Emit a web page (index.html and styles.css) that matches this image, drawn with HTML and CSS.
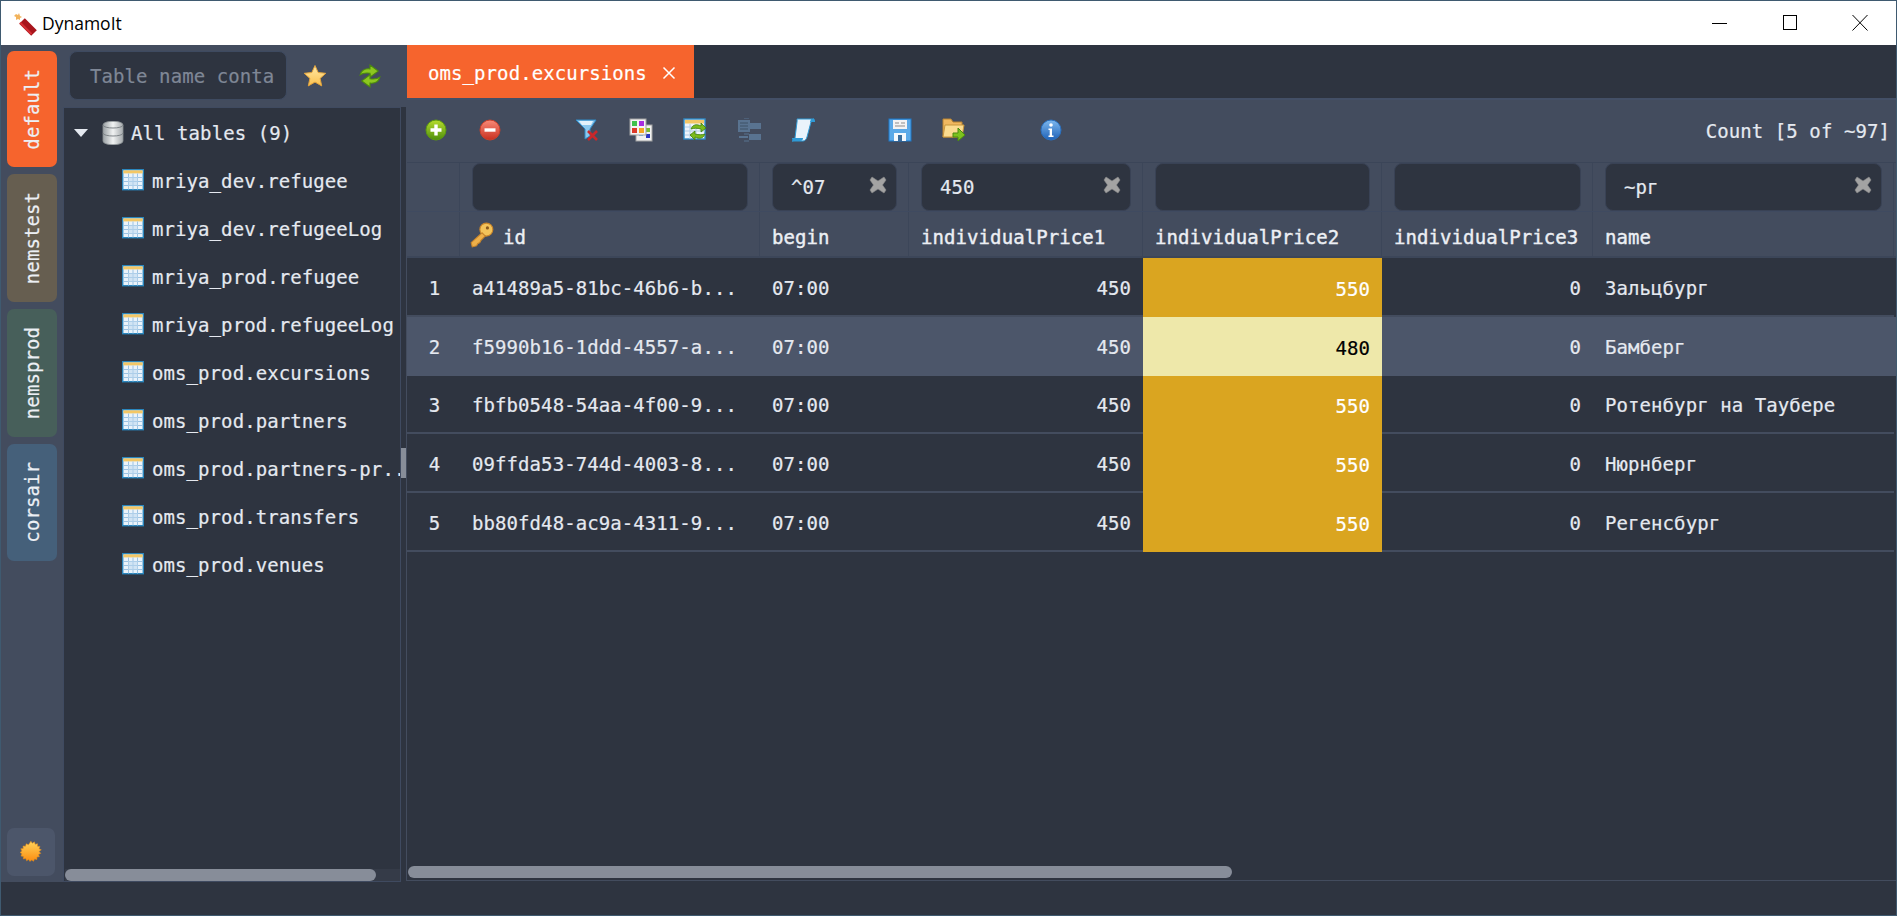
FILE: index.html
```html
<!DOCTYPE html>
<html lang="en">
<head>
<meta charset="utf-8">
<title>DynamoIt</title>
<link rel="stylesheet" href="styles.css">
</head>
<body>
<svg class="defs" width="0" height="0" aria-hidden="true">
  <defs>
    <linearGradient id="gGreen" x1="0" y1="0" x2="0" y2="1"><stop offset="0" stop-color="#b6dc2e"/><stop offset="1" stop-color="#4f8f0c"/></linearGradient>
    <linearGradient id="gRed" x1="0" y1="0" x2="0" y2="1"><stop offset="0" stop-color="#f98a78"/><stop offset="1" stop-color="#c8301f"/></linearGradient>
    <linearGradient id="gBlue" x1="0" y1="0" x2="0" y2="1"><stop offset="0" stop-color="#7db8ef"/><stop offset="1" stop-color="#1f62b8"/></linearGradient>
    <linearGradient id="gSun" x1="0" y1="0" x2="0" y2="1"><stop offset="0" stop-color="#ffd35a"/><stop offset="1" stop-color="#fb8c10"/></linearGradient>
    <linearGradient id="gStar" x1="0" y1="0" x2="0" y2="1"><stop offset="0" stop-color="#ffe9a8"/><stop offset="1" stop-color="#fbc04c"/></linearGradient>
    <linearGradient id="gDb" x1="0" y1="0" x2="1" y2="0"><stop offset="0" stop-color="#9aa0a4"/><stop offset=".5" stop-color="#f0f2f2"/><stop offset="1" stop-color="#a4a9ac"/></linearGradient>
    <symbol id="tbl" viewBox="0 0 22 22">
      <rect x="0.700" y="0.700" width="20.600" height="20" fill="#eaf3fb" stroke="#2a86bd" stroke-width="1.400"/>
      <rect x="1.400" y="1.400" width="19.200" height="3" fill="#f3c766"/>
      <path d="M1 8.500h20M1 12.500h20M1 16.500h20M6.500 4.500v16M11 4.500v16M15.500 4.500v16" stroke="#9cc3e3" stroke-width="1" fill="none"/>
      <rect x="6" y="8" width="10" height="9" fill="#bcd7ee" opacity=".55"/>
    </symbol>
    <symbol id="xmark" viewBox="0 0 18 18">
      <path d="M3 1 9 5l6-4 2 3-3.500 5L17 14l-2 3-6-4-6 4-2-3 3.500-5L1 4z" fill="#a3a3a3" stroke="#8a8a8a" stroke-width=".6"/>
    </symbol>
  </defs>
</svg>
<div class="window">
  <header class="titlebar">
    <svg class="app-icon" viewBox="0 0 26 26" width="26" height="26">
      <path d="M10 10 22 22" stroke="#a8151c" stroke-width="8" stroke-linecap="butt"/>
      <path d="M8 11.500 19.500 23" stroke="#e0353a" stroke-width="2" opacity=".8"/>
      <path d="M4 3l2 1 1-2 1 3 2 1-2 1 0 2-2-1-2 1 0-3-2-1z" fill="#f2b35c"/>
    </svg>
    <span class="app-name">DynamoIt</span>
    <div class="win-controls">
      <svg class="win-btn" viewBox="0 0 16 16" width="16" height="16"><path d="M0 8.500h15" stroke="#000" fill="none"/></svg>
      <svg class="win-btn" viewBox="0 0 16 16" width="16" height="16"><rect x="1.500" y="0.500" width="13" height="14" stroke="#000" fill="none"/></svg>
      <svg class="win-btn" viewBox="0 0 16 16" width="16" height="16"><path d="M0.500 0 15.500 15.500M15.500 0 0.500 15.500" stroke="#000" fill="none"/></svg>
    </div>
  </header>

  <div class="workspace">
    <nav class="rail">
      <div class="rail-tab tab-default"><span>default</span></div>
      <div class="rail-tab tab-nemstest"><span>nemstest</span></div>
      <div class="rail-tab tab-nemsprod"><span>nemsprod</span></div>
      <div class="rail-tab tab-corsair"><span>corsair</span></div>
      <div class="theme-btn">
        <svg viewBox="0 0 22 22" width="22" height="22"><path d="M11 0l1.600 2.300 2.300-1.600.8 2.700 2.700-.6-.1 2.800 2.800.2-1 2.600 2.500 1.200L20 11.500l2 2-2.500 1.200.9 2.600-2.700.3v2.800l-2.700-.7-1 2.600-2.300-1.500L10 22.500 8.500 20.300 6.200 21.800 5.300 19.200l-2.700.5.100-2.800-2.700-.4L1 13.900-1 12.500 1 11-.2 8.400 2.500 8 2.200 5.300 5 5.500 5.800 2.800 8.300 4z" transform="translate(1 .2) scale(.9)" fill="url(#gSun)" stroke="#e08a1a" stroke-width=".6"/></svg>
      </div>
    </nav>

    <aside class="side">
      <div class="side-top">
        <div class="search">Table name conta</div>
        <svg class="star" viewBox="0 0 24 24" width="24" height="24"><path d="M12 1.500l3.200 7 7.600.8-5.700 5.100 1.600 7.500L12 18.100l-6.700 3.800 1.600-7.500L1.200 9.300l7.600-.8z" fill="url(#gStar)" stroke="#e0a23c" stroke-width="1"/></svg>
        <svg class="refresh" viewBox="2 1 20 22" width="24" height="24">
          <path d="M3 11c1-4 4-6 9-5.500V2l7.500 5.500L12 13V9.500C8 9 5 9.500 3 11z" fill="#8cc71f" stroke="#4c8c0c" stroke-width="1"/>
          <path d="M21 13c-1 4-4 6-9 5.500V22l-7.500-5.500L12 11v3.500c4 .5 7 0 9-1.500z" fill="#8cc71f" stroke="#4c8c0c" stroke-width="1"/>
        </svg>
      </div>
      <div class="tree-pane">
        <div class="tree">
          <div class="tree-root">
            <span class="caret"></span>
            <svg class="db" viewBox="0 0 22 24" width="22" height="24">
              <path d="M1 4c0-5 20-5 20 0v16c0 5-20 5-20 0z" fill="url(#gDb)" stroke="#8d9396" stroke-width=".8"/>
              <path d="M1 4c0 4 20 4 20 0M1 12c0 4 20 4 20 0" fill="none" stroke="#7f8589" stroke-width="1"/>
            </svg>
            <span>All tables (9)</span>
          </div>
          <div class="tree-item"><svg class="tbl-ico"><use href="#tbl"/></svg><span class="tree-label">mriya_dev.refugee</span></div>
          <div class="tree-item"><svg class="tbl-ico"><use href="#tbl"/></svg><span class="tree-label">mriya_dev.refugeeLog</span></div>
          <div class="tree-item"><svg class="tbl-ico"><use href="#tbl"/></svg><span class="tree-label">mriya_prod.refugee</span></div>
          <div class="tree-item"><svg class="tbl-ico"><use href="#tbl"/></svg><span class="tree-label">mriya_prod.refugeeLog</span></div>
          <div class="tree-item"><svg class="tbl-ico"><use href="#tbl"/></svg><span class="tree-label">oms_prod.excursions</span></div>
          <div class="tree-item"><svg class="tbl-ico"><use href="#tbl"/></svg><span class="tree-label">oms_prod.partners</span></div>
          <div class="tree-item"><svg class="tbl-ico"><use href="#tbl"/></svg><span class="tree-label">oms_prod.partners-pr..</span></div>
          <div class="tree-item"><svg class="tbl-ico"><use href="#tbl"/></svg><span class="tree-label">oms_prod.transfers</span></div>
          <div class="tree-item"><svg class="tbl-ico"><use href="#tbl"/></svg><span class="tree-label">oms_prod.venues</span></div>
        </div>
        <div class="hscroll side-scroll"><div class="thumb"></div></div>
      </div>
    </aside>

    <div class="splitter"><div class="split-thumb"></div></div>

    <main class="main">
      <div class="tabstrip">
        <div class="tab">
          <span>oms_prod.excursions</span>
          <svg viewBox="0 0 14 14" width="14" height="14"><path d="M1.500 1.500 12.500 12.500M12.500 1.500 1.500 12.500" stroke="#fff" stroke-width="1.500" fill="none"/></svg>
        </div>
      </div>

      <div class="toolbar">
        <svg class="tool" viewBox="-1 -1 24 24"><circle cx="11" cy="11" r="10" fill="url(#gGreen)" stroke="#5c9a10"/><path d="M11 5.500v11M5.500 11h11" stroke="#fff" stroke-width="3.400"/></svg>
        <svg class="tool" viewBox="-1 -1 24 24"><circle cx="11" cy="11" r="10" fill="url(#gRed)" stroke="#c8402c"/><path d="M5.500 11h11" stroke="#fff" stroke-width="3.400"/></svg>
        <svg class="tool gap-left" viewBox="0 0 24 24">
          <path d="M1 2h20l-6 9v7l-5 3V11z" fill="#8cc8ee" stroke="#2f8ac6"/>
          <path d="M4 3h14l-2 4H7z" fill="#e4f2fb"/>
          <path d="M13 13l9 9M22 13l-9 9" stroke="#c9272a" stroke-width="2.600"/>
        </svg>
        <svg class="tool" viewBox="0 0 24 24">
          <rect x="7" y="7" width="16" height="16" fill="#f2f2f2" stroke="#a2a2a2"/>
          <rect x="10" y="14" width="4" height="4" fill="#6fb7e8"/><rect x="17" y="10" width="4" height="4" fill="#7abf30"/><rect x="17" y="16" width="4" height="4" fill="#2a35c4"/>
          <rect x="1" y="1" width="16" height="16" fill="#f4f4f4" stroke="#a2a2a2"/>
          <rect x="3" y="3" width="5" height="5" fill="#3fc24c"/><rect x="10" y="3" width="5" height="5" fill="#a72ee0"/><rect x="3" y="10" width="5" height="5" fill="#dd3a2a"/><rect x="10" y="10" width="5" height="5" fill="#f6a623"/>
        </svg>
        <svg class="tool" viewBox="0 0 24 24">
          <rect x="1" y="1" width="21" height="20" fill="#eef5fb" stroke="#2f8ac6" stroke-width="1.400"/>
          <rect x="2" y="2" width="19" height="3.500" fill="#f3c766"/>
          <path d="M2 9h20M2 13h20M2 17h20M7 6v15M13 6v15" stroke="#b0cde6"/>
          <path d="M8 11c2-5 6-5 10-3V5l5 5-5 4v-3c-4-1-7-1-10 0z" fill="#7cbb1c" stroke="#3d7f0c" stroke-width=".8"/>
          <path d="M22 16c-2 5-6 5-10 3v3l-5-5 5-4v3c4 1 7 1 10 0z" fill="#7cbb1c" stroke="#3d7f0c" stroke-width=".8"/>
        </svg>
        <svg class="tool dim" viewBox="0 0 24 24">
          <rect x="1" y="2" width="12" height="12" fill="#5d7a99"/>
          <path d="M3 5h8M3 8h8M3 11h8" stroke="#3f5269"/>
          <path d="M13 8h4M13 19h4M7 0h5M7 16h5M7 23h5" stroke="#5d7a99"/>
          <rect x="13" y="5" width="11" height="6" fill="#5d7a99"/>
          <rect x="12" y="16" width="12" height="6" fill="#5d7a99"/>
          <path d="M2 19h9" stroke="#5d7a99" stroke-width="2"/>
        </svg>
        <svg class="tool" viewBox="0 0 24 24">
          <path d="M6 1h17c-1.500 0-2.500 1-3 3l-4 15c-.5 2-2 4-4 4H1c2 0 2.500-1 3-3L6 4c.3-1 0-3 0-3z" fill="#eaf3fb" stroke="#2f9ad6"/>
          <path d="M1 20h11c0 2-1 3-3 3H3c-1 0-2-1-2-3z" fill="#2f9ad6"/>
          <path d="M20 1h3c1 0 1 2 1 3h-5z" fill="#2f9ad6"/>
        </svg>
        <svg class="tool gap-left" viewBox="0 0 24 24">
          <rect x="1" y="1" width="22" height="22" fill="#5ba9e8" stroke="#1f78c8"/>
          <rect x="5" y="2" width="14" height="9" fill="#f4f4f4"/>
          <path d="M7 5h4M13 5h4M7 8h10" stroke="#8d8d8d"/>
          <rect x="6" y="15" width="12" height="8" fill="#f4f8fc"/>
          <rect x="10" y="17" width="4" height="6" fill="#3a6d9e"/>
        </svg>
        <svg class="tool" viewBox="0 0 24 24">
          <path d="M1 1h8l2 3h9v15H1z" fill="#f0b860" stroke="#b98330"/>
          <path d="M3 7h19l-2 12H1z" fill="#fbdc90" stroke="#c8963c"/>
          <path d="M11 15h5v-5l7 7-7 6v-4h-5z" fill="#7cc21e" stroke="#4a8a10"/>
        </svg>
        <svg class="tool gap-left" viewBox="-1 -1 24 24">
          <circle cx="11" cy="11" r="10" fill="url(#gBlue)" stroke="#2a70c0"/>
          <circle cx="11" cy="6" r="1.800" fill="#fff"/>
          <path d="M8.500 9.500h3.500v7h1.500v1.500h-5v-1.500h1.200v-5.500h-1.200z" fill="#fff"/>
        </svg>
        <span class="count">Count [5 of ~97]</span>
      </div>

      <div class="grid">
        <div class="row filter-row">
          <div class="cell"></div>
          <div class="cell"><div class="filter"></div></div>
          <div class="cell"><div class="filter"><span>^07</span><svg class="clear"><use href="#xmark"/></svg></div></div>
          <div class="cell"><div class="filter"><span>450</span><svg class="clear"><use href="#xmark"/></svg></div></div>
          <div class="cell"><div class="filter"></div></div>
          <div class="cell"><div class="filter"></div></div>
          <div class="cell"><div class="filter"><span>~рг</span><svg class="clear"><use href="#xmark"/></svg></div></div>
        </div>
        <div class="row head-row">
          <div class="cell"></div>
          <div class="cell">
            <svg class="key" viewBox="0 0 22 24" width="24" height="26">
              <circle cx="15" cy="7" r="6" fill="#f3c35a" stroke="#c8852a"/>
              <circle cx="16" cy="5.500" r="1.500" fill="#8a5a1e"/>
              <path d="M11 10 1 19l1 4 4-1 1-2 2-1 1-2 4-4z" fill="#eeb04a" stroke="#c8852a"/>
            </svg>
            <span>id</span>
          </div>
          <div class="cell"><span>begin</span></div>
          <div class="cell"><span>individualPrice1</span></div>
          <div class="cell"><span>individualPrice2</span></div>
          <div class="cell"><span>individualPrice3</span></div>
          <div class="cell"><span>name</span></div>
        </div>

        <div class="row data-row">
          <div class="cell num">1</div><div class="cell">a41489a5-81bc-46b6-b...</div><div class="cell">07:00</div><div class="cell right">450</div><div class="cell right gold">550</div><div class="cell right">0</div><div class="cell">Зальцбург</div>
        </div>
        <div class="row data-row selected">
          <div class="cell num">2</div><div class="cell">f5990b16-1ddd-4557-a...</div><div class="cell">07:00</div><div class="cell right">450</div><div class="cell right pale">480</div><div class="cell right">0</div><div class="cell">Бамберг</div>
        </div>
        <div class="row data-row">
          <div class="cell num">3</div><div class="cell">fbfb0548-54aa-4f00-9...</div><div class="cell">07:00</div><div class="cell right">450</div><div class="cell right gold">550</div><div class="cell right">0</div><div class="cell">Ротенбург на Таубере</div>
        </div>
        <div class="row data-row">
          <div class="cell num">4</div><div class="cell">09ffda53-744d-4003-8...</div><div class="cell">07:00</div><div class="cell right">450</div><div class="cell right gold">550</div><div class="cell right">0</div><div class="cell">Нюрнберг</div>
        </div>
        <div class="row data-row">
          <div class="cell num">5</div><div class="cell">bb80fd48-ac9a-4311-9...</div><div class="cell">07:00</div><div class="cell right">450</div><div class="cell right gold">550</div><div class="cell right">0</div><div class="cell">Регенсбург</div>
        </div>
      </div>
      <div class="hscroll main-scroll"><div class="thumb"></div></div>
    </main>
  </div>
  <footer class="statusbar"></footer>
</div>
</body>
</html>
```

FILE: styles.css
```css
* { box-sizing: border-box; }

html, body {
  margin: 0;
  height: 100%;
  overflow: hidden;
}

body {
  background: #2e3440;
  color: #e5e9f0;
  font-family: "DejaVu Sans Mono", "Liberation Mono", monospace;
  font-size: 19px;
  letter-spacing: 0.08px;
  -webkit-text-stroke: 0.2px currentColor;
}

.defs { position: absolute; }

.window {
  width: 1897px;
  height: 916px;
  border: 1px solid #3f5a70;
  display: flex;
  flex-direction: column;
}

/* title bar */
.titlebar {
  flex: 0 0 44px;
  background: #fff;
  display: flex;
  align-items: center;
  padding-left: 11px;
}
.app-icon { margin-top: 1px; }
.app-name {
  font-family: "Open Sans", "Noto Sans", sans-serif;
  font-size: 17.500px;
  letter-spacing: 0;
  -webkit-text-stroke: 0;
  color: #000;
  margin-left: 4px;
}
.win-controls {
  margin-left: auto;
  display: flex;
  gap: 54px;
  padding-right: 28px;
}
.win-btn { display: block; }

/* workspace */
.workspace {
  flex: 0 0 837px;
  display: flex;
  min-height: 0;
}

/* connection rail */
.rail {
  flex: 0 0 62px;
  background: #434c5e;
  padding: 6px;
  display: flex;
  flex-direction: column;
  gap: 7px;
}
.rail-tab {
  width: 50px;
  border-radius: 7px;
  color: #eceff4;
  display: flex;
  align-items: center;
  justify-content: center;
}
.rail-tab span {
  writing-mode: vertical-rl;
  transform: rotate(180deg);
}
.tab-default { height: 116px; background: #f6642d; }
.tab-nemstest { height: 128px; background: #665e50; }
.tab-nemsprod { height: 128px; background: #475f5a; }
.tab-corsair { height: 117px; background: #45607a; }
.theme-btn {
  margin-top: auto;
  width: 48px;
  height: 48px;
  border-radius: 7px;
  background: #4c566a;
  display: flex;
  align-items: center;
  justify-content: center;
}

/* side panel */
.side {
  flex: 0 0 338px;
  min-width: 0;
  display: flex;
  flex-direction: column;
  background: #434c5e;
}
.side-top {
  flex: 0 0 62px;
  display: flex;
  align-items: flex-start;
  padding: 6px 0 0 6px;
}
.search {
  width: 218px;
  height: 49px;
  background: #2e3440;
  border: 1px solid #3e4a60;
  border-radius: 8px;
  color: #7f8796;
  line-height: 49px;
  padding-left: 20px;
  overflow: hidden;
  white-space: nowrap;
}
.star { margin: 13px 0 0 16px; }
.refresh { margin: 13px 0 0 31px; }

.tree-pane {
  flex: 1;
  min-height: 0;
  background: #2e3440;
  border: 1px solid #3f4a60;
  display: flex;
  flex-direction: column;
  overflow: hidden;
}
.tree {
  flex: 1;
  padding-top: 1px;
  min-height: 0;
}
.tree-root, .tree-item {
  height: 48px;
  display: flex;
  align-items: center;
  white-space: nowrap;
}
.tree-root { padding-left: 10px; }
.caret {
  width: 0;
  height: 0;
  border-left: 7px solid transparent;
  border-right: 7px solid transparent;
  border-top: 8px solid #e5e9f0;
  margin-right: 14px;
}
.db { margin-right: 7px; }
.tree-item { padding-left: 58px; }
.tbl-ico { width: 22px; height: 22px; flex: none; margin: -3px 8px 0 0; }

/* scrollbars */
.hscroll { flex: none; }
.thumb { height: 100%; background: #878d99; border-radius: 6px; }
.side-scroll { height: 12px; margin: 0 0 0 1px; background: #353b48; }
.side-scroll .thumb { width: 311px; }
.main-scroll { height: 12px; margin: auto 0 2px 1px; }
.main-scroll .thumb { width: 824px; }

/* splitter */
.splitter {
  flex: 0 0 5px;
  display: flex;
  align-items: flex-start;
  background: linear-gradient(#434c5e 0 62px, #2e3440 62px);
}
.split-thumb {
  width: 100%;
  height: 30px;
  margin-top: 403px;
  background: #878d99;
}

/* main */
.main {
  flex: 1;
  min-width: 0;
  display: flex;
  flex-direction: column;
  border-left: 1px solid #434c5e;
  border-bottom: 1px solid #434c5e;
  margin-bottom: 1px;
}
.tabstrip {
  flex: 0 0 55px;
  background: #2e3440;
  display: flex;
}
.tab {
  width: 287px;
  background: #f6642d;
  color: #fff;
  display: flex;
  align-items: center;
  padding-left: 21px;
  gap: 15px;
}
.toolbar {
  flex: 0 0 64px;
  background: #434c5e;
  border-top: 2px solid #434f66;
  display: flex;
  align-items: center;
  padding: 0 6px 0 17px;
  gap: 30px;
  margin-top: -2px;
  position: relative;
}
.tool { width: 24px; height: 24px; flex: none; margin-top: -2px; }
.gap-left { margin-left: 43px; }
.dim { opacity: .85; }
.count { margin-left: auto; }

/* grid */
.grid { flex: none; }
.row {
  display: grid;
  grid-template-columns: 53px 300px 149px 234px 239px 211px 301px;
}
.filter-row {
  height: 50px;
  background: #434c5e;
  border-top: 1px solid #3b4558;
  border-bottom: 1px solid #3f4a60;
}
.filter-row .cell {
  border-right: 1px solid #3c4659;
  padding: 0 11px 0 12px;
}
.filter {
  height: 48px;
  background: #2e3440;
  border: 1px solid #394255;
  border-radius: 8px;
  padding: 0 9px 0 18px;
  display: flex;
  align-items: center;
  justify-content: space-between;
}
.clear { width: 18px; height: 18px; flex: none; margin-top: -4px; }
.head-row {
  height: 46px;
  background: #434c5e;
  border-bottom: 2px solid #3c4659;
}
.head-row .cell {
  border-right: 1px solid #3c4659;
  padding: 6px 0 0 12px;
  display: flex;
  align-items: center;
  color: #eceff4;
  -webkit-text-stroke: 0.4px currentColor;
}
.key { margin: -4px 9px 0 -2px; }
.data-row { height: 58.750px; }
.data-row .cell {
  display: flex;
  align-items: center;
  padding: 3px 12px 0;
  white-space: nowrap;
  border-bottom: 2px solid #434c5e;
}
.data-row .num { justify-content: center; padding: 3px 0 0 2px; }
.data-row .right { justify-content: flex-end; }
.selected { background: #4c566a; }
.selected .cell { border-bottom-color: #4c566a; }
.data-row .gold { background: #daa520; color: #fff; border-bottom: 0; }
.data-row .pale { background: #eee8aa; color: #000; border-bottom: 0; }

/* status */
.statusbar {
  flex: 1;
  background: #2e3440;
}
```
